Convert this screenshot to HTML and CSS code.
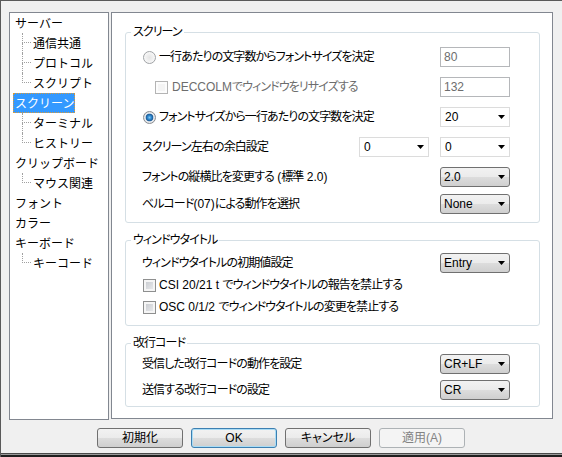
FILE: index.html
```html
<!DOCTYPE html>
<html lang="ja">
<head>
<meta charset="utf-8">
<title>設定</title>
<link rel="stylesheet" href="styles.css">
</head>
<body>
<div class="window">
  <div class="main">
    <div class="tree">
      <div class="node"><span class="label">サーバー</span></div>
      <div class="node"><span class="conn"><i class="up"></i><i class="down"></i></span><span class="label">通信共通</span></div>
      <div class="node"><span class="conn"><i class="up"></i><i class="down"></i></span><span class="label">プロトコル</span></div>
      <div class="node"><span class="conn last"><i class="up"></i><i class="down"></i></span><span class="label">スクリプト</span></div>
      <div class="node"><span class="label selected">スクリーン</span></div>
      <div class="node"><span class="conn"><i class="up"></i><i class="down"></i></span><span class="label">ターミナル</span></div>
      <div class="node"><span class="conn last"><i class="up"></i><i class="down"></i></span><span class="label">ヒストリー</span></div>
      <div class="node"><span class="label">クリップボード</span></div>
      <div class="node"><span class="conn last"><i class="up"></i><i class="down"></i></span><span class="label">マウス関連</span></div>
      <div class="node"><span class="label">フォント</span></div>
      <div class="node"><span class="label">カラー</span></div>
      <div class="node"><span class="label">キーボード</span></div>
      <div class="node"><span class="conn last"><i class="up"></i><i class="down"></i></span><span class="label">キーコード</span></div>
    </div>
    <div class="panel">
      <fieldset class="group g1">
        <legend>スクリーン</legend>
        <div class="row">
          <span class="opt"><span class="radio"></span>一行あたりの文字数からフォントサイズを決定</span>
          <span class="field disabled">80</span>
        </div>
        <div class="row">
          <span class="opt sub disabled"><span class="check dis"></span><span><span class="lat">DECCOLM</span>でウィンドウをリサイズする</span></span>
          <span class="field disabled">132</span>
        </div>
        <div class="row">
          <span class="opt"><span class="radio on"></span>フォントサイズから一行あたりの文字数を決定</span>
          <span class="combo flat"><span>20</span><svg width="7" height="4" viewBox="0 0 7 4"><path d="M0 0h7L3.5 4z"/></svg></span>
        </div>
        <div class="row">
          <span class="text">スクリーン左右の余白設定</span>
          <span class="pair">
            <span class="combo flat"><span>0</span><svg width="7" height="4" viewBox="0 0 7 4"><path d="M0 0h7L3.5 4z"/></svg></span>
            <span class="combo flat"><span>0</span><svg width="7" height="4" viewBox="0 0 7 4"><path d="M0 0h7L3.5 4z"/></svg></span>
          </span>
        </div>
        <div class="row">
          <span class="text">フォントの縦横比を変更する<span class="lat"> (</span>標準<span class="lat"> 2.0)</span></span>
          <span class="combo btn"><span>2.0</span><svg width="7" height="4" viewBox="0 0 7 4"><path d="M0 0h7L3.5 4z"/></svg></span>
        </div>
        <div class="row tight">
          <span class="text">ベルコード<span class="lat">(07)</span>による動作を選択</span>
          <span class="combo btn"><span>None</span><svg width="7" height="4" viewBox="0 0 7 4"><path d="M0 0h7L3.5 4z"/></svg></span>
        </div>
      </fieldset>
      <fieldset class="group g2">
        <legend>ウィンドウタイトル</legend>
        <div class="row">
          <span class="text">ウィンドウタイトルの初期値設定</span>
          <span class="combo btn"><span>Entry</span><svg width="7" height="4" viewBox="0 0 7 4"><path d="M0 0h7L3.5 4z"/></svg></span>
        </div>
        <div class="row">
          <span class="opt"><span class="check"></span><span><span class="lat">CSI 20/21 t </span>でウィンドウタイトルの報告を禁止する</span></span>
        </div>
        <div class="row">
          <span class="opt"><span class="check"></span><span><span class="lat">OSC 0/1/2 </span>でウィンドウタイトルの変更を禁止する</span></span>
        </div>
      </fieldset>
      <fieldset class="group g3">
        <legend>改行コード</legend>
        <div class="row">
          <span class="text">受信した改行コードの動作を設定</span>
          <span class="combo btn"><span>CR+LF</span><svg width="7" height="4" viewBox="0 0 7 4"><path d="M0 0h7L3.5 4z"/></svg></span>
        </div>
        <div class="row">
          <span class="text">送信する改行コードの設定</span>
          <span class="combo btn"><span>CR</span><svg width="7" height="4" viewBox="0 0 7 4"><path d="M0 0h7L3.5 4z"/></svg></span>
        </div>
      </fieldset>
    </div>
  </div>
  <div class="buttons">
    <span class="button">初期化</span>
    <span class="button default">OK</span>
    <span class="button">キャンセル</span>
    <span class="button off">適用(A)</span>
  </div>
  <div class="frame-bottom"></div>
</div>
</body>
</html>
```
FILE: styles.css
```css
html, body {
  margin: 0;
  padding: 0;
  background: #f0f0f0;
}
body {
  font-family: "Liberation Sans", "Noto Sans CJK JP", sans-serif;
  font-size: 12px;
  color: #000;
}
.window {
  width: 562px;
  height: 457px;
  box-sizing: border-box;
  border-top: 1px solid #5a5a5a;
  border-left: 1px solid #5a5a5a;
  display: flex;
  flex-direction: column;
  overflow: hidden;
}
.main {
  display: flex;
  gap: 2px;
  padding: 11px 0 0 8px;
}
.tree {
  width: 100px;
  height: 408px;
  box-sizing: border-box;
  border: 1px solid #828790;
  background: #fff;
  font-family: "Noto Sans CJK JP", sans-serif;
  font-size: 12px;
}
.node {
  display: flex;
  height: 20px;
  align-items: stretch;
  padding-left: 3px;
}
.conn {
  display: flex;
  flex-direction: column;
  width: 9px;
  margin-left: 9px;
  height: 20px;
}
.conn i {
  display: block;
  box-sizing: border-box;
  border-left: 1px dotted #a0a0a0;
}
.conn .up {
  height: 10px;
  border-bottom: 1px dotted #a0a0a0;
}
.conn .down {
  flex: 1;
}
.conn.last .down {
  border-left: none;
}
.label {
  display: block;
  line-height: 20px;
  height: 20px;
  padding: 0 1px 0 2px;
  white-space: nowrap;
  box-sizing: border-box;
}
.label.selected {
  background: #3399ff;
  color: #fff;
  outline: 1px dotted #d89a3a;
  outline-offset: -1px;
}
.panel {
  width: 442px;
  height: 407px;
  box-sizing: border-box;
  border: 1px solid #828790;
  background: #fff;
  padding: 11px 12px 0 13px;
  display: flex;
  flex-direction: column;
  gap: 9px;
  font-feature-settings: "palt";
  letter-spacing: -0.9px;
}
.lat {
  letter-spacing: 0;
}
.group {
  margin: 0;
  border: 1px solid #d5dfe5;
  border-radius: 3px;
  display: flex;
  flex-direction: column;
  min-width: 0;
}
.group legend {
  margin-left: -11px;
  padding: 0 2px;
  line-height: 16px;
  height: 16px;
}
.g1 { padding: 7px 29px 8px 16px; gap: 10px; }
.g2 { padding: 5px 29px 8px 16px; gap: 2px; }
.g3 { padding: 3px 29px 6px 16px; gap: 6px; }
.row {
  display: flex;
  align-items: center;
  justify-content: space-between;
  height: 20px;
  line-height: 16px;
  white-space: nowrap;
}
.row.tight { margin-top: -3px; }
.opt {
  display: flex;
  align-items: center;
  gap: 3px;
}
.opt.sub { margin-left: 13px; gap: 4px; }
.disabled { color: #6d6d6d; }
.radio {
  width: 13px;
  height: 13px;
  box-sizing: border-box;
  border-radius: 50%;
  border: 1px solid #a0a3a6;
  background: radial-gradient(circle at 50% 50%, #e4e4e4 0, #f6f6f6 5px);
  margin-left: 1px;
}
.radio.on {
  border-color: #8a8d91;
  background: radial-gradient(circle at 50% 50%, #7ec6f2 0, #2d86cc 2px, #1e5b94 3.5px, #b8c9dc 4px, #eef0f2 4.5px, #d6d8db 6px);
}
.check {
  width: 13px;
  height: 13px;
  box-sizing: border-box;
  border: 1px solid #8e8f8f;
  background: linear-gradient(135deg, #c3c6cb, #eeeff1);
  box-shadow: inset 0 0 0 2px #f5f5f5;
  margin-left: 1px;
}
.check.dis {
  border-color: #b4b4b4;
  background: #f4f4f4;
  box-shadow: inset 0 0 0 2px #fcfcfc;
  margin-left: 0;
}
.field {
  width: 70px;
  height: 20px;
  box-sizing: border-box;
  border: 1px solid #b5b7ba;
  background: #fff;
  padding: 1px 3px;
  line-height: 16px;
  letter-spacing: 0;
}
.pair {
  display: flex;
  gap: 11px;
}
.combo {
  width: 70px;
  height: 20px;
  box-sizing: border-box;
  display: flex;
  align-items: center;
  justify-content: space-between;
  padding: 0 4px 0 3px;
  letter-spacing: 0;
}
.combo svg { fill: #000; flex: none; }
.combo.flat {
  background: #fff;
  border: 1px solid #dcdcdc;
  padding-left: 4px;
}
.combo.btn {
  border: 1px solid #707070;
  border-radius: 3px;
  background: linear-gradient(#f2f2f2 0%, #ebebeb 50%, #dddddd 50%, #cfcfcf 100%);
}
.buttons {
  display: flex;
  justify-content: center;
  gap: 8px;
  margin-top: 8px;
  padding-right: 1px;
}
.button {
  width: 86px;
  height: 20px;
  box-sizing: border-box;
  border: 1px solid #707070;
  border-radius: 3px;
  background: linear-gradient(#f2f2f2 0%, #ebebeb 50%, #dddddd 50%, #cfcfcf 100%);
  display: flex;
  align-items: center;
  justify-content: center;
  line-height: 16px;
  font-feature-settings: "palt";
}
.button.default {
  border-color: #3c7fb1;
  box-shadow: inset 0 0 0 1px #a9dcf5;
}
.button.off {
  border-color: #adb2b5;
  background: #f4f4f4;
  color: #838383;
}
.frame-bottom {
  margin-top: auto;
  height: 4px;
  box-sizing: border-box;
  border-top: 1px solid #4a4a4a;
  border-bottom: 2px solid #1e1e1e;
  background: #9a9a9a;
}
```
